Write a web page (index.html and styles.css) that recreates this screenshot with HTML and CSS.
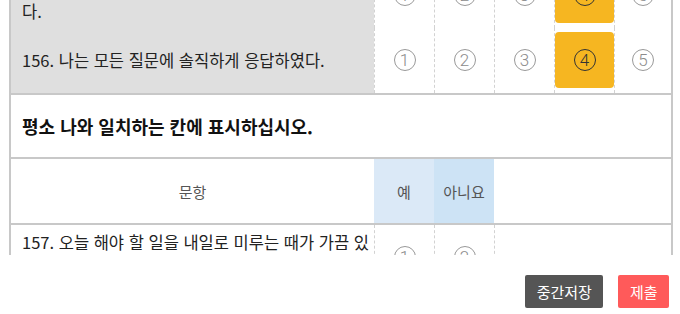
FILE: index.html
```html
<!DOCTYPE html>
<html lang="ko">
<head>
<meta charset="utf-8">
<title>검사</title>
<link rel="stylesheet" href="styles.css">
</head>
<body>
<div class="survey">
  <div class="scroll">
    <div class="sheet">
      <div class="group">
        <div class="qrow answered">
          <div class="q">155. 나는 화가 나도 겉으로 드러내지 않을 때가 있다.</div>
          <div class="a"><span class="opt"><span class="num">1</span></span></div>
          <div class="a"><span class="opt"><span class="num">2</span></span></div>
          <div class="a"><span class="opt"><span class="num">3</span></span></div>
          <div class="a"><span class="opt selected"><span class="num">4</span></span></div>
          <div class="a"><span class="opt"><span class="num">5</span></span></div>
        </div>
        <div class="qrow answered">
          <div class="q">156. 나는 모든 질문에 솔직하게 응답하였다.</div>
          <div class="a"><span class="opt"><span class="num">1</span></span></div>
          <div class="a"><span class="opt"><span class="num">2</span></span></div>
          <div class="a"><span class="opt"><span class="num">3</span></span></div>
          <div class="a"><span class="opt selected"><span class="num">4</span></span></div>
          <div class="a"><span class="opt"><span class="num">5</span></span></div>
        </div>
      </div>
      <div class="instruction">평소 나와 일치하는 칸에 표시하십시오.</div>
      <div class="head">
        <div class="h-q">문항</div>
        <div class="h-yes">예</div>
        <div class="h-no">아니요</div>
        <div class="h-rest"></div>
      </div>
      <div class="qrow two">
        <div class="q">157. 오늘 해야 할 일을 내일로 미루는 때가 가끔 있다.</div>
        <div class="a"><span class="opt"><span class="num">1</span></span></div>
        <div class="a"><span class="opt"><span class="num">2</span></span></div>
        <div class="rest"></div>
      </div>
    </div>
  </div>
  <div class="actions">
    <button class="btn btn-save" type="button">중간저장</button>
    <button class="btn btn-submit" type="button">제출</button>
  </div>
</div>
</body>
</html>
```
FILE: styles.css
```css
* { box-sizing: border-box; }
html, body {
  margin: 0;
  padding: 0;
  background: #fff;
}
body {
  font-family: "Noto Sans CJK KR", "Noto Sans", sans-serif;
  color: #222;
}
.survey {
  width: 664px;
  margin-left: 9px;
}
.scroll {
  height: 255px;
  overflow: hidden;
}
.sheet {
  margin-top: -37px;
  border-left: 2px solid #c8c8c8;
  border-right: 2px solid #c8c8c8;
}
.group {
  border-bottom: 2px solid #c8c8c8;
}
.qrow {
  display: grid;
  grid-template-columns: 363px 60px 60px 60px 60px 57px;
}
.qrow.two {
  grid-template-columns: 363px 60px 60px 177px;
}
.q {
  display: flex;
  align-items: center;
  padding: 0 1px 0 11px;
  font-size: 16.5px;
  line-height: 31px;
  color: #222;
}
.answered .q {
  background: #dfdfdf;
}
.a, .rest {
  border-left: 1px dashed #d2d2d2;
  padding: 4px 0 5px;
  height: 65px;
  display: flex;
}
.opt {
  flex: 1;
  display: flex;
  align-items: center;
  justify-content: center;
  border-radius: 4px;
}
.opt.selected {
  background: #f6b621;
}
.num {
  width: 22px;
  height: 22px;
  border: 1px solid #999;
  border-radius: 50%;
  display: flex;
  align-items: center;
  justify-content: center;
  font-family: Roboto, "Liberation Sans", sans-serif;
  font-weight: 300;
  font-size: 17px;
  line-height: 1;
  color: #8c8c8c;
}
.selected .num {
  border-color: #333;
  color: #333;
}
.instruction {
  height: 64px;
  display: flex;
  align-items: center;
  padding-left: 11px;
  font-size: 18px;
  font-weight: bold;
  color: #111;
  border-bottom: 2px solid #c8c8c8;
}
.head {
  display: grid;
  grid-template-columns: 363px 60px 60px 177px;
  height: 66px;
  border-bottom: 2px solid #c8c8c8;
  font-size: 15px;
  color: #555;
}
.head > div {
  display: flex;
  align-items: center;
  justify-content: center;
}
.h-yes { background: #dbe9f7; }
.h-no { background: #cde3f5; }
.actions {
  display: flex;
  justify-content: flex-end;
  gap: 15px;
  margin-top: 20px;
  padding-right: 4px;
}
.btn {
  height: 33px;
  padding: 0 11.5px;
  border: none;
  border-radius: 2px;
  font-family: "Noto Sans CJK KR", "Noto Sans", sans-serif;
  font-size: 15px;
  color: #fff;
  cursor: pointer;
}
.btn-save { background: #555; }
.btn-submit { background: #ff5a5a; }
```
